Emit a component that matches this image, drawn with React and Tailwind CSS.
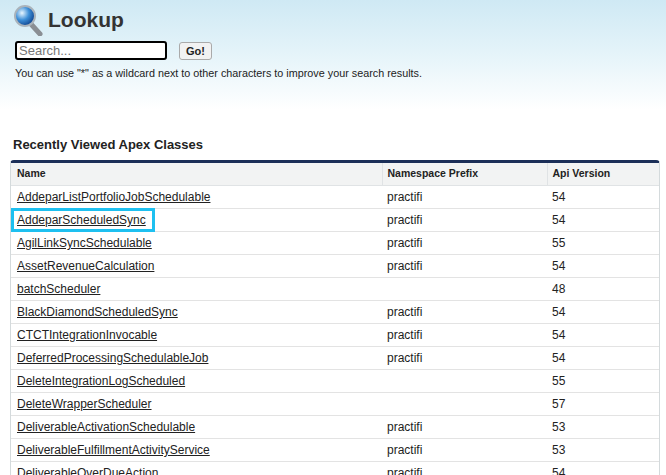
export default function App() {
  const rows = [
    ["AddeparListPortfolioJobSchedulable", "practifi", "54"],
    ["AddeparScheduledSync", "practifi", "54"],
    ["AgilLinkSyncSchedulable", "practifi", "55"],
    ["AssetRevenueCalculation", "practifi", "54"],
    ["batchScheduler", "", "48"],
    ["BlackDiamondScheduledSync", "practifi", "54"],
    ["CTCTIntegrationInvocable", "practifi", "54"],
    ["DeferredProcessingSchedulableJob", "practifi", "54"],
    ["DeleteIntegrationLogScheduled", "", "55"],
    ["DeleteWrapperScheduler", "", "57"],
    ["DeliverableActivationSchedulable", "practifi", "53"],
    ["DeliverableFulfillmentActivityService", "practifi", "53"],
    ["DeliverableOverDueAction", "practifi", "54"],
  ];
  return (
    <div className="w-[666px] h-[475px] overflow-hidden bg-[linear-gradient(#cfe9f4_0px,#e3f3f9_50px,#ffffff_110px)] text-[#222]" style={{ fontFamily: "Arial, 'Liberation Sans', sans-serif" }}>
      <div className="flex items-center gap-[5px] pl-[13px] pt-[2px] h-[38px]">
        <svg width="30" height="32" viewBox="0 0 30 32">
          <defs>
            <radialGradient id="g" cx="0.35" cy="0.35" r="0.7">
              <stop offset="0" stopColor="#e8f6ff" />
              <stop offset="0.5" stopColor="#3d8fd8" />
              <stop offset="1" stopColor="#0b3f8a" />
            </radialGradient>
          </defs>
          <line x1="17" y1="19" x2="27" y2="30" stroke="#8a8f94" strokeWidth="5" strokeLinecap="round" />
          <circle cx="12" cy="12" r="10" fill="url(#g)" stroke="#a9b3bb" strokeWidth="2" />
        </svg>
        <span className="text-[21px] font-bold text-[#333]">Lookup</span>
      </div>
      <div className="flex items-center gap-[12px] pl-[15px] mt-[3px]">
        <input placeholder="Search..." className="w-[152px] h-[19px] border-2 border-black rounded-[3px] px-[2px] text-[13px] outline-none placeholder:text-[#777] bg-white" />
        <button className="h-[18px] px-[6px] border border-[#aaa] rounded-[3px] bg-[#f2f2f2] text-[11px] font-bold">Go!</button>
      </div>
      <div className="pl-[15px] mt-[5px] text-[10.8px] text-[#222]">You can use "*" as a wildcard next to other characters to improve your search results.</div>
      <div className="pl-[13px] mt-[54px] text-[13px] font-bold text-[#222]">Recently Viewed Apex Classes</div>
      <div className="ml-[10px] mr-[6px] mt-[5px] border-t-[3px] border-[#1c2f58] rounded-t-[4px] border-x border-x-[#d4dadc] bg-white">
        <table className="w-full border-collapse text-[12px]">
          <thead>
            <tr className="bg-[#f2f3f3] h-[23px] text-[10.5px] font-bold text-left">
              <th className="w-[371px] pl-[6px] border-b border-[#e0e3e5] border-r">Name</th>
              <th className="w-[165px] pl-[5px] border-b border-[#e0e3e5] border-r">Namespace Prefix</th>
              <th className="pl-[5px] border-b border-[#e0e3e5]">Api Version</th>
            </tr>
          </thead>
          <tbody>
            {rows.map((r, i) => (
              <tr key={i} className="h-[23px] border-b border-[#e3e3e3]">
                <td className="pl-[6px]">
                  {i === 1 ? (
                    <span className="inline-block outline outline-[3px] outline-[#1ec0f0] -ml-[3px] pl-[3px] pr-[6px]"><span className="underline">{r[0]}</span></span>
                  ) : (
                    <span className="underline">{r[0]}</span>
                  )}
                </td>
                <td className="pl-[5px]">{r[1]}</td>
                <td className="pl-[5px]">{r[2]}</td>
              </tr>
            ))}
          </tbody>
        </table>
      </div>
    </div>
  );
}
